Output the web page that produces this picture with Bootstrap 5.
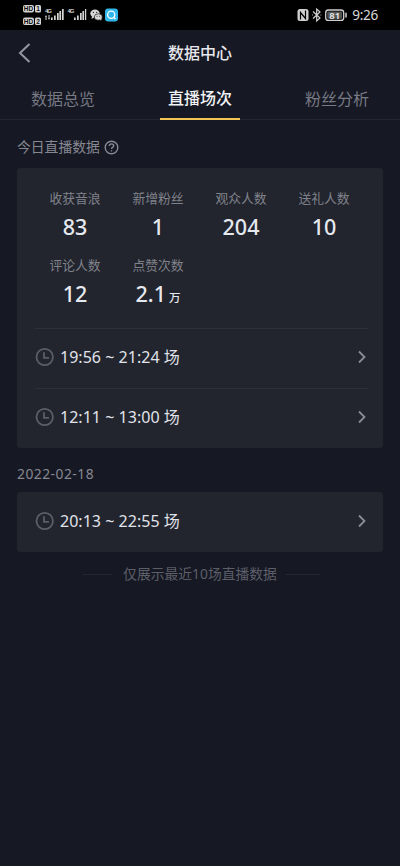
<!DOCTYPE html>
<html lang="zh-CN">
<head>
<meta charset="utf-8">
<meta name="viewport" content="width=device-width, initial-scale=1">
<title>数据中心</title>
<link href="https://cdn.jsdelivr.net/npm/bootstrap@5.3.0/dist/css/bootstrap.min.css" rel="stylesheet">
<style>
body{background:#161823;color:#e6e7ec;font-family:"Noto Sans","Noto Sans CJK SC",sans-serif;font-size:16px;line-height:24px;min-height:866px}
svg{display:block;flex:none}
.status{height:30px;background:#000;padding:0 22px 0 22px}
.clock{font-size:13.6px;line-height:30px;color:#d8d8d8;letter-spacing:-.3px}
.title-bar{height:47px;display:grid;grid-template-columns:40px 1fr 40px;padding-bottom:1px}
.title-bar h1{font-size:16px;line-height:24px;font-weight:500}
.tabs{height:43px;border-bottom:1px solid #24262f;display:grid;grid-template-columns:80px 80px 80px;justify-content:space-between;padding:0 23px}
.tabs .nav-link{padding:10px 0 0;height:43px;color:#777983;font-size:16px;line-height:24px;text-align:center;border-radius:0;white-space:nowrap}
.tabs .nav-link.active{color:#f2f3f6;font-weight:500;border-bottom:2px solid #f1c453;padding-top:9px}
.muted{color:#868892}
.sub{font-size:13.8px;line-height:20px;padding-left:17px}
.heading{height:48px;padding-top:6px}
.date{letter-spacing:.5px}
.panel{background:#22252e;border-radius:4px;margin:0 17px;padding:0 15px 0 18px}
.stats{display:grid;grid-template-columns:repeat(4,83px);align-content:start;padding-top:20px;height:160px}
.stat{height:67px;width:83px;padding-right:3px}
.stat .name{font-size:12.8px;line-height:20px;color:#80828b}
.stat .num{font-size:21.5px;line-height:26px;font-weight:500;margin-top:6px;color:#e6e8ef}
.unit{font-size:11.5px;margin-left:3px}
.session{height:60px;color:#e1e3ea;text-decoration:none;letter-spacing:.03px;padding-bottom:2px}
.session.line{border-top:1px solid #2d3038;padding-bottom:4px}
.session span{margin-left:5px}
.foot{font-size:13.8px;line-height:20px;color:#5c5e68;padding-left:3px}
.foot i{width:29px;height:1px;background:#252730}
.foot i:first-child{margin-right:3px}
.foot i:last-child{width:35px}
</style>
</head>
<body>
<div class="status d-flex justify-content-between align-items-center">
<svg width="98" height="30" viewBox="22 0 98 30" fill="#d5d5d5" font-family="Liberation Sans,sans-serif" font-weight="700">
<rect x="23" y="5" width="11" height="7.5" rx="2"/><rect x="35" y="5" width="6" height="7.5" rx="1.5"/>
<rect x="23" y="17.5" width="11" height="7.5" rx="2"/><rect x="35" y="17.5" width="6" height="7.5" rx="1.5"/>
<g fill="#111" font-size="6.5"><text x="23.8" y="11.1">HD</text><text x="36.2" y="11">1</text><text x="23.8" y="23.6">HD</text><text x="36.2" y="23.5">2</text></g>
<text x="45" y="13" font-size="6" textLength="7">4G</text><text x="67.5" y="13" font-size="6" textLength="7">4G</text>
<path d="M46 15l-1 2h2zM49 20l-1-2h2z M45.5 17h1v3h-1zM48.5 15h1v3h-1z"/>
<path d="M51 17.5h1.7V20H51zM54 15.5h1.7V20H54zM57 13h1.7v7H57zM59.4 11h1.7v9h-1.7zM62 9h1.7v11H62z"/>
<path d="M74 17.5h1.7V20H74zM77 15.5h1.7V20H77zM80 13h1.7v7H80zM82.4 11h1.7v9h-1.7zM85 9h1.2v11H85z"/>
<ellipse cx="95" cy="13.5" rx="4.7" ry="3.9"/><path d="M92 16l-.5 3 3-1.8z"/>
<ellipse cx="98.3" cy="17" rx="4" ry="3.2" stroke="#000" stroke-width=".6"/><path d="M100 19l1 2 .5-3z"/>
<g fill="#222"><circle cx="93.4" cy="12.4" r=".6"/><circle cx="96.7" cy="12.4" r=".6"/><circle cx="97" cy="16.2" r=".5"/><circle cx="99.7" cy="16.2" r=".5"/></g>
<rect x="105" y="8.5" width="13" height="13" rx="3" fill="#30b7e9"/>
<circle cx="111.2" cy="14.7" r="3.6" fill="none" stroke="#fff" stroke-width="1.3"/><path d="M113.5 17l2 2" stroke="#fff" stroke-width="1.5"/>
</svg>
<div class="d-flex align-items-center">
<svg width="55" height="30" viewBox="298 0 55 30" fill="none" stroke="#d0d0d0">
<rect x="298.5" y="9" width="11" height="12" rx="2.5" fill="#d0d0d0" stroke="none"/>
<path d="M301.5 19.5v-7l5 6v-8" stroke="#000" stroke-width="1.2"/>
<path d="M314 11.5l7 6.5-3.3 3V9l3.3 3-7 6.5" stroke-width="1.2"/><path d="M313 15h.8M321.5 15h.8" stroke-width="1.2"/>
<rect x="326.7" y="10" width="18" height="10.4" rx="2.7" stroke-width="1.3"/><rect x="328.3" y="11.6" width="14.8" height="7.2" rx="1" fill="#555" stroke="none"/>
<path d="M347 12.8v4.6" stroke-width="1.5"/>
<text x="335.7" y="18.7" text-anchor="middle" font-family="Noto Sans,sans-serif" font-size="9.5" font-weight="600" fill="#eee" stroke="none">81</text>
</svg>
<span class="clock">9:26</span>
</div>
</div>

<header class="title-bar align-items-center">
<a href="#" class="ps-3" aria-label="返回"><svg width="20" height="24" viewBox="16 0 20 24" fill="none" stroke="#9597a0" stroke-width="2"><path d="M29.5 3L20 12l9.5 9"/></svg></a>
<h1 class="m-0 text-center">数据中心</h1>
</header>
<nav class="tabs">
<a class="nav-link" href="#">数据总览</a>
<a class="nav-link active" href="#">直播场次</a>
<a class="nav-link" href="#">粉丝分析</a>
</nav>

<main>
<div class="sub muted d-flex align-items-center heading">
<span>今日直播数据</span>
<svg class="ms-1" width="15" height="15" viewBox="0 0 15 15" fill="none" stroke="#868892" stroke-width="1.4"><circle cx="7.5" cy="7.5" r="6.3"/><path d="M5.3 6.1c0-3 4.5-2.8 4.4-.2C9.6 7.5 7.5 7.3 7.5 9M7.5 10.2v1.3"/></svg>
</div>
<section class="panel">
<div class="stats text-center">
<div class="stat"><div class="name">收获音浪</div><div class="num">83</div></div>
<div class="stat"><div class="name">新增粉丝</div><div class="num">1</div></div>
<div class="stat"><div class="name">观众人数</div><div class="num">204</div></div>
<div class="stat"><div class="name">送礼人数</div><div class="num">10</div></div>
<div class="stat"><div class="name">评论人数</div><div class="num">12</div></div>
<div class="stat"><div class="name">点赞次数</div><div class="num">2.1<span class="unit">万</span></div></div>
</div>
<a href="#" class="session line d-flex align-items-center">
<svg width="20" height="20" viewBox="0 0 20 20" fill="none" stroke="#5b5e67" stroke-width="1.8"><circle cx="9.7" cy="10" r="8.2"/><path d="M9 5.3v5.5h5"/></svg>
<span class="me-auto">19:56 ~ 21:24 场</span>
<svg width="12" height="14" viewBox="0 0 12 14" fill="none" stroke="#8b8d95" stroke-width="1.8"><path d="M3 1.5L8.5 7 3 12.5"/></svg>
</a>
<a href="#" class="session line d-flex align-items-center">
<svg width="20" height="20" viewBox="0 0 20 20" fill="none" stroke="#5b5e67" stroke-width="1.8"><circle cx="9.7" cy="10" r="8.2"/><path d="M9 5.3v5.5h5"/></svg>
<span class="me-auto">12:11 ~ 13:00 场</span>
<svg width="12" height="14" viewBox="0 0 12 14" fill="none" stroke="#8b8d95" stroke-width="1.8"><path d="M3 1.5L8.5 7 3 12.5"/></svg>
</a>
</section>
<div class="sub muted date pt-3 pb-2">2022-02-18</div>
<section class="panel">
<a href="#" class="session d-flex align-items-center">
<svg width="20" height="20" viewBox="0 0 20 20" fill="none" stroke="#5b5e67" stroke-width="1.8"><circle cx="9.7" cy="10" r="8.2"/><path d="M9 5.3v5.5h5"/></svg>
<span class="me-auto">20:13 ~ 22:55 场</span>
<svg width="12" height="14" viewBox="0 0 12 14" fill="none" stroke="#8b8d95" stroke-width="1.8"><path d="M3 1.5L8.5 7 3 12.5"/></svg>
</a>
</section>
<div class="foot d-flex justify-content-center align-items-center gap-2 pt-2 mt-1"><i></i><span>仅展示最近10场直播数据</span><i></i></div>
</main>
<script src="https://cdn.jsdelivr.net/npm/bootstrap@5.3.0/dist/js/bootstrap.bundle.min.js"></script>
</body>
</html>
